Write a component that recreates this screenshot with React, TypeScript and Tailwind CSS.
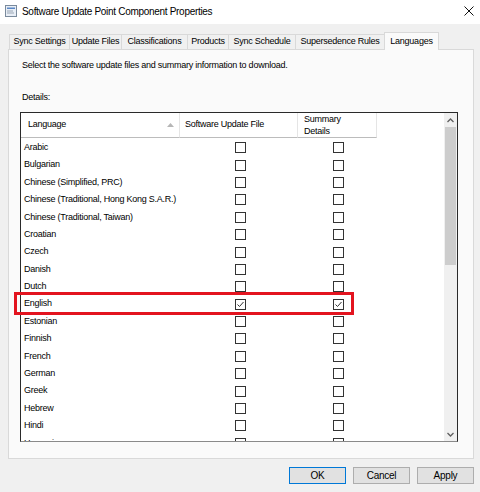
import React from "react";

const languages = [
  { name: "Arabic", file: false, summary: false },
  { name: "Bulgarian", file: false, summary: false },
  { name: "Chinese (Simplified, PRC)", file: false, summary: false },
  { name: "Chinese (Traditional, Hong Kong S.A.R.)", file: false, summary: false },
  { name: "Chinese (Traditional, Taiwan)", file: false, summary: false },
  { name: "Croatian", file: false, summary: false },
  { name: "Czech", file: false, summary: false },
  { name: "Danish", file: false, summary: false },
  { name: "Dutch", file: false, summary: false },
  { name: "English", file: true, summary: true },
  { name: "Estonian", file: false, summary: false },
  { name: "Finnish", file: false, summary: false },
  { name: "French", file: false, summary: false },
  { name: "German", file: false, summary: false },
  { name: "Greek", file: false, summary: false },
  { name: "Hebrew", file: false, summary: false },
  { name: "Hindi", file: false, summary: false },
  { name: "Hungarian", file: false, summary: false },
];

const tabs = [
  { label: "Sync Settings", w: "w-[61px]" },
  { label: "Update Files", w: "w-[53px]" },
  { label: "Classifications", w: "w-[67px]" },
  { label: "Products", w: "w-[42px]" },
  { label: "Sync Schedule", w: "w-[68px]" },
  { label: "Supersedence Rules", w: "w-[90px]" },
];

const CheckBox = ({ checked }: { checked: boolean }) => (
  <div className="w-[11px] h-[11px] border border-[#333333] bg-white flex items-center justify-center">
    {checked && (
      <svg width="9" height="9" viewBox="0 0 9 9">
        <path d="M1.5 4.5 L3.5 6.5 L7.5 2" fill="none" stroke="#333333" strokeWidth="1" />
      </svg>
    )}
  </div>
);

const App = () => {
  return (
    <div
      className="w-[480px] h-[492px] flex flex-col bg-[#f0f0f0] text-black text-[9px] tracking-[-0.25px] overflow-hidden"
      style={{ fontFamily: '"Liberation Sans", Arial, sans-serif' }}
    >
      {/* title bar */}
      <div className="h-[24px] bg-white flex items-center pl-[5px] pr-[6px] pb-[2px] shrink-0">
        <svg width="12" height="12" viewBox="0 0 12 12" className="mr-[5px]">
          <rect x="0.5" y="0.5" width="11" height="11" fill="#e8eef6" stroke="#7a8a9c" />
          <rect x="2" y="2.5" width="8" height="1.5" fill="#5b87c5" />
          <rect x="2" y="5.5" width="6" height="1" fill="#9aa6b4" />
          <rect x="2" y="7.5" width="7" height="1" fill="#9aa6b4" />
        </svg>
        <span className="text-[10px] tracking-[-0.3px]">Software Update Point Component Properties</span>
        <div className="flex-1" />
        <svg width="10" height="10" viewBox="0 0 10 10">
          <path d="M0.5 0.5 L9.5 9.5 M9.5 0.5 L0.5 9.5" stroke="#111" strokeWidth="1" />
        </svg>
      </div>

      {/* tabs */}
      <div className="flex items-end pl-[9px] pt-[8px] h-[25px] shrink-0">
        {tabs.map((t) => (
          <div
            key={t.label}
            className={`${t.w} h-[15px] border border-b-0 border-[#d9d9d9] -ml-px first:ml-0 flex items-center justify-center whitespace-nowrap`}
          >
            {t.label}
          </div>
        ))}
        <div className="w-[55px] h-[18px] -ml-px mb-[-1px] border border-b-0 border-[#d9d9d9] bg-[#fafafa] relative z-10 flex items-start pt-[2px] justify-center">
          Languages
        </div>
      </div>

      {/* panel */}
      <div className="ml-[8px] w-[466px] h-[410px] border border-[#d9d9d9] bg-[#fafafa] shrink-0 flex flex-col pl-[13px] pt-[8px]">
        <div className="h-[14px] leading-[14px]">
          Select the software update files and summary information to download.
        </div>
        <div className="h-[14px] mt-[18px] leading-[14px]">Details:</div>
        <div className="mt-[8px] -ml-[2px] w-[438px] h-[330px] border border-[#2a2a2a] border-b-[#8a8a8a] bg-white flex overflow-hidden">
          <div className="flex-1 flex flex-col overflow-hidden">
            {/* header */}
            <div className="h-[25px] shrink-0 flex">
              <div className="w-[159px] border-b border-r border-[#e5e5e5] border-b-[#bcbcbc] flex items-center pl-[7px] pr-[5px]">
                <span>Language</span>
                <div className="flex-1" />
                <svg width="7" height="4" viewBox="0 0 7 4">
                  <path d="M0 4 L3.5 0 L7 4 Z" fill="#b6b6b6" />
                </svg>
              </div>
              <div className="w-[118px] border-b border-r border-[#e5e5e5] border-b-[#bcbcbc] flex items-center pl-[5px]">
                Software Update File
              </div>
              <div className="w-[79px] border-b border-r border-[#e5e5e5] border-b-[#bcbcbc] flex flex-col justify-center pl-[6px] leading-[12px]">
                <span>Summary</span>
                <span>Details</span>
              </div>
            </div>
            <div className="h-[1px] shrink-0" />
            {/* rows */}
            {languages.map((l) => (
              <div key={l.name} className="h-[17.4px] shrink-0 flex items-center">
                <div className="w-[159px] pl-[3px] whitespace-nowrap">{l.name}</div>
                <div className="w-[118px] flex justify-center pl-[2px]">
                  <CheckBox checked={l.file} />
                </div>
                <div className="w-[79px] flex justify-center pl-[2px]">
                  <CheckBox checked={l.summary} />
                </div>
              </div>
            ))}
          </div>
          {/* scrollbar */}
          <div className="w-[13px] bg-[#f0f0f0] flex flex-col shrink-0">
            <div className="h-[14px] flex items-center justify-center">
              <svg width="7" height="5" viewBox="0 0 7 5">
                <path d="M0.5 4 L3.5 1 L6.5 4" fill="none" stroke="#606060" strokeWidth="1.3" />
              </svg>
            </div>
            <div className="h-[138px] mx-[1px] bg-[#cdcdcd]" />
            <div className="flex-1" />
            <div className="h-[14px] flex items-center justify-center">
              <svg width="7" height="5" viewBox="0 0 7 5">
                <path d="M0.5 1 L3.5 4 L6.5 1" fill="none" stroke="#606060" strokeWidth="1.3" />
              </svg>
            </div>
          </div>
        </div>
      </div>

      {/* buttons */}
      <div className="flex pl-[289px] pt-[8px] gap-[7px] text-[10px]">
        <button className="w-[57px] h-[17px] bg-[#e1e1e1] border border-[#0078d7] flex items-center justify-center">
          OK
        </button>
        <button className="w-[57px] h-[17px] bg-[#e1e1e1] border border-[#adadad] flex items-center justify-center">
          Cancel
        </button>
        <button className="w-[57px] h-[17px] bg-[#e1e1e1] border border-[#adadad] flex items-center justify-center">
          Apply
        </button>
      </div>

      {/* highlight around English row */}
      <div className="absolute left-[14px] top-[292px] w-[340px] h-[23px] border-[3px] border-[#e3141f] pointer-events-none" />
    </div>
  );
};

export default App;
